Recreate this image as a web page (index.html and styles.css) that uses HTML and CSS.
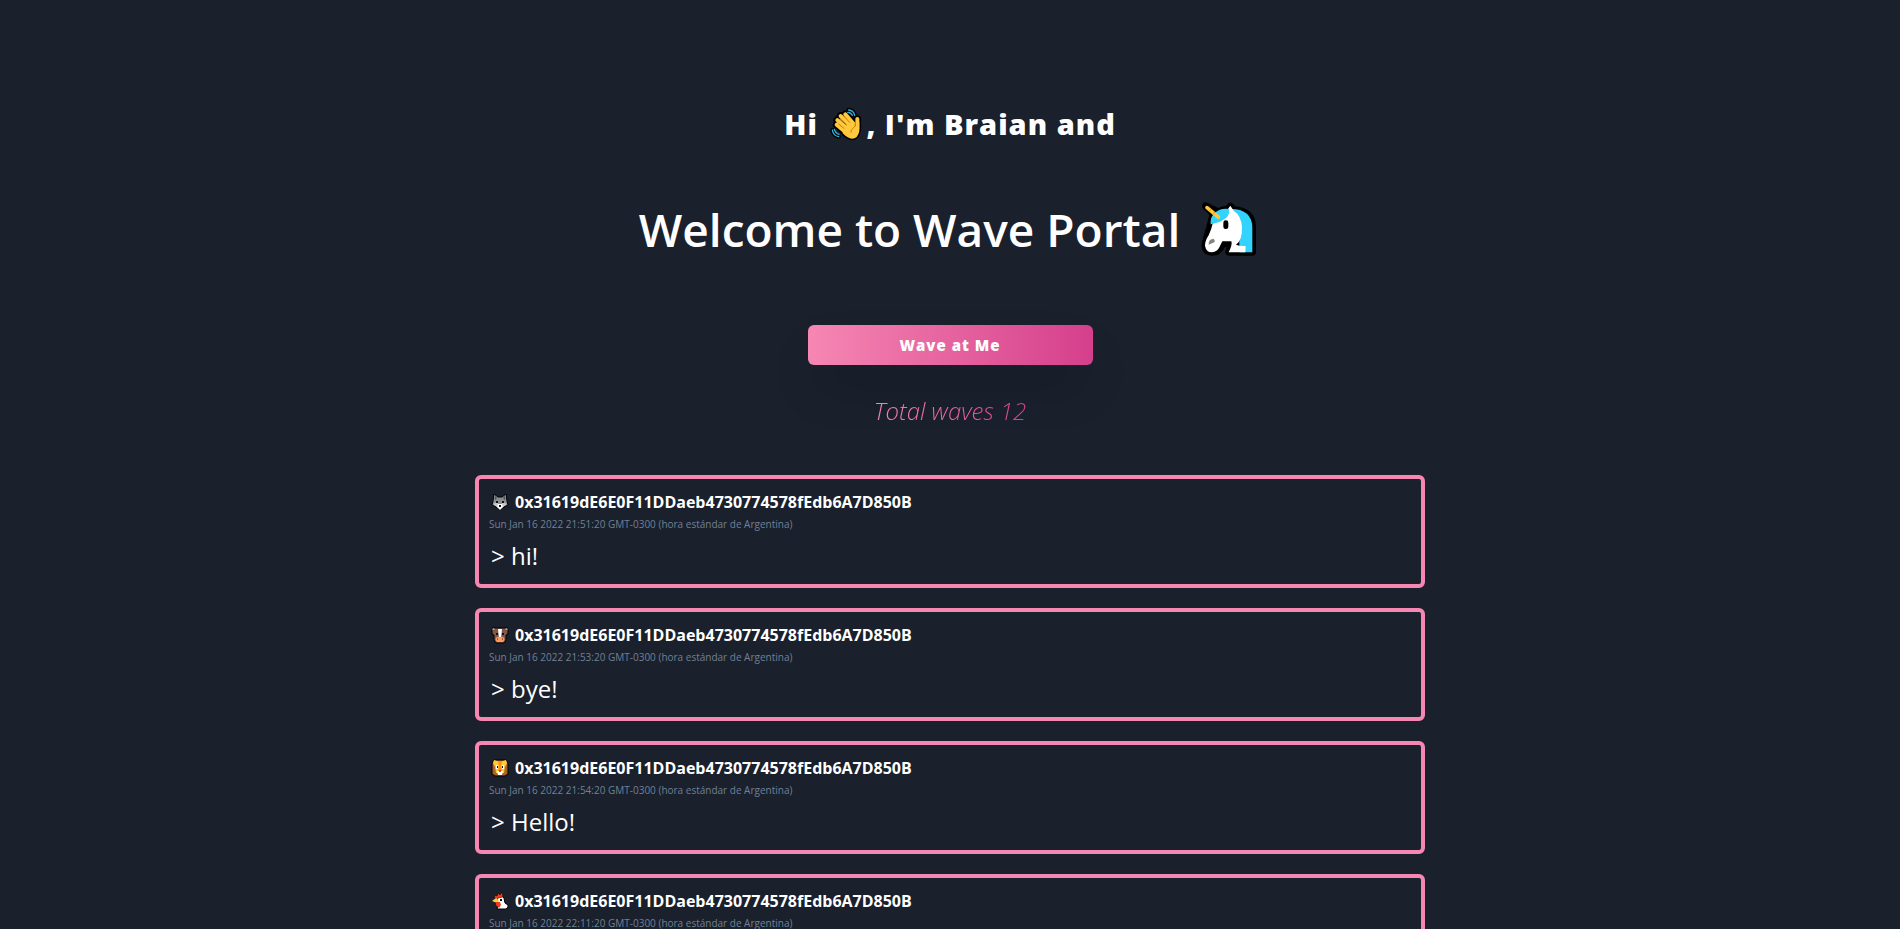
FILE: index.html
```html
<!DOCTYPE html>
<html lang="en">
<head>
<meta charset="utf-8">
<meta name="viewport" content="width=device-width, initial-scale=1">
<title>Wave Portal</title>
<link rel="stylesheet" href="styles.css">
</head>
<body>
<main class="portal">
  <h2 class="greeting">Hi
    <svg class="icon-wave" viewBox="20 18 96 102" role="img" aria-label="waving hand">
      <g fill="none" stroke="#000" stroke-linecap="round" stroke-linejoin="round">
        <path stroke-width="13" d="M76 27Q90 28 94 43M27 87Q31 104 46 107"/>
        <path stroke-width="23" d="M42 57L72 84M40 71L70 96M52 45L82 75M66 40L90 68M102 54V84"/>
        <path fill="#000" stroke-width="11" d="M60 75L88 65L96 80L106 62V92Q102 112 86 112Q72 112 56 94Z"/>
      </g>
      <path fill="none" stroke="#31b5de" stroke-width="4" stroke-linecap="round" d="M76 27Q91 28 94 43M73 34Q83 34 87 43M27 87Q30 104 46 107M33 85Q37 98 47 100"/>
      <g fill="none" stroke="#ffc83d" stroke-width="12" stroke-linecap="round"><path d="M42 57L72 84M40 71L70 96M52 45L82 75M66 40L90 68M102 54V84"/></g>
      <path fill="#ffc83d" d="M58 74L88 62L96 76L108 62V90Q104 113 86 113Q74 113 58 97Z"/>
      <path fill="none" stroke="#d67d00" stroke-width="3" stroke-linecap="round" d="M46 69L62 82M51 55L70 72M63 47L79 64M96 67Q98 77 88 82Q82 87 83 94"/>
    </svg>, I'm Braian and</h2>
  <h1 class="title">Welcome to Wave Portal
    <svg class="icon-unicorn" viewBox="36 34 171 168" role="img" aria-label="unicorn">
      <path fill="#000" stroke="#000" stroke-width="22" stroke-linejoin="round" d="M53 49L76 71L69 101L52 162Q49 182 66 186Q82 190 92 181L106 161H130L123 187H193V112Q193 64 135 60L127 50L119 60Q103 58 92 68Z"/>
      <path fill="#32d4ff" d="M127 57Q193 58 193 115V188H154V95Z"/>
      <path fill="#fff" d="M127 48L117 62L75 98Q71 118 62 137Q51 153 51 168Q54 187 72 188Q88 187 94 173L103 155H130Q134 164 122 188H172L173 169Q154 170 144 165Q163 153 162 112Q160 78 137 63Z"/>
      <path fill="#32d4ff" d="M68 104Q66 82 80 70Q97 54 123 58Q126 81 105 91Q91 100 68 104Z"/>
      <path stroke="#ffc83d" stroke-width="11" stroke-linecap="round" d="M57 54L91 82"/>
      <path stroke="#e19b16" stroke-width="3" d="M64 65L70 58M74 74L80 67"/>
      <rect fill="#000" x="106" y="92" width="15" height="26" rx="7"/>
      <path fill="#858585" d="M62 165Q61 149 75 147Q83 151 79 158Z"/>
    </svg>
  </h1>
  <button class="wave-button" type="button">Wave at Me</button>
  <p class="total">Total waves 12</p>
  <section class="waves" aria-label="Waves">
    <article class="card">
      <h3 class="address">
        <svg class="icon-animal" viewBox="0 0 18 18" role="img" aria-label="wolf">
          <path fill="#8a8d91" stroke="#000" stroke-linejoin="round" d="M3 1L7 4H11L15 1L16 8L17 12L13 14L9 17L5 14L1 12L2 8Z"/>
          <path fill="#4a4a4a" d="M4 3L6 5L4 7ZM14 3L12 5L14 7Z"/><path fill="#c8c8c8" d="M2 11L6 9L8 12L6 14ZM16 11L12 9L10 12L12 14Z"/><path fill="#fff" d="M7 11H11L12 14L9 17L6 14Z"/><path fill="#111" d="M5 8H7V10H5ZM11 8H13V10H11ZM8 12H10V14H8Z"/>
        </svg><span>0x31619dE6E0F11DDaeb4730774578fEdb6A7D850B</span>
      </h3>
      <time class="date">Sun Jan 16 2022 21:51:20 GMT-0300 (hora estándar de Argentina)</time>
      <p class="message">&gt; hi!</p>
    </article>
    <article class="card">
      <h3 class="address">
        <svg class="icon-animal" viewBox="0 0 18 18" role="img" aria-label="cow">
          <path fill="#80594a" stroke="#000" stroke-linejoin="round" d="M2 1L4 2H14L16 1L17 4L17 8L15 9L15 14L13 17H5L3 14L3 9L1 8L1 4Z"/>
          <path fill="#999" d="M2 2L4 3L3 4L1 4ZM16 2L14 3L15 4L17 4Z"/><path fill="#fff" d="M7 3H11L10 12H8Z"/><path fill="#ff9b62" d="M6 11H12Q15 13 12 16H6Q3 13 6 11Z"/><path fill="#111" d="M5 7H7V9H5ZM11 7H13V9H11Z"/><path fill="#b94d25" d="M6 12H7V14H6ZM11 12H12V14H11Z"/>
        </svg><span>0x31619dE6E0F11DDaeb4730774578fEdb6A7D850B</span>
      </h3>
      <time class="date">Sun Jan 16 2022 21:53:20 GMT-0300 (hora estándar de Argentina)</time>
      <p class="message">&gt; bye!</p>
    </article>
    <article class="card">
      <h3 class="address">
        <svg class="icon-animal" viewBox="0 0 18 18" role="img" aria-label="lion">
          <path fill="#a56527" stroke="#000" stroke-linejoin="round" d="M3 1H15L17 4V15L14 17H4L1 15V4Z"/>
          <path fill="#ffc83d" d="M3 1L6 2H12L15 1L16 4L14 8L13 14H5L4 8L2 4Z"/><path fill="#f7940b" d="M7 2H11L10 7L11 12H7L8 7Z"/><path fill="#fff" d="M5 6H7V10H5ZM11 6H13V10H11ZM6 12H12L11 16H7Z"/><path fill="#111" d="M6 7H7V9H6ZM11 7H12V9H11Z"/><path fill="#f03a17" d="M8 11H10V13H8Z"/>
        </svg><span>0x31619dE6E0F11DDaeb4730774578fEdb6A7D850B</span>
      </h3>
      <time class="date">Sun Jan 16 2022 21:54:20 GMT-0300 (hora estándar de Argentina)</time>
      <p class="message">&gt; Hello!</p>
    </article>
    <article class="card">
      <h3 class="address">
        <svg class="icon-animal" viewBox="0 0 18 18" role="img" aria-label="chicken">
          <path fill="#fff" stroke="#000" stroke-linejoin="round" d="M6 6Q10 2 13 6L14 11L17 13V15L15 17H6L7 13L5 10Z"/>
          <path fill="#f03a17" stroke="#000" stroke-width="0.5" d="M4 6L3 3L6 4L7 1L9 3L11 0L12 5L7 6L6 8Z"/><path fill="#ffc83d" d="M1 9L5 6L8 9L6 11Z"/><path fill="#f03a17" d="M5 10H9L10 13L8 16L5 13Z"/><path fill="#111" d="M9 7H11V9H9Z"/>
        </svg><span>0x31619dE6E0F11DDaeb4730774578fEdb6A7D850B</span>
      </h3>
      <time class="date">Sun Jan 16 2022 22:11:20 GMT-0300 (hora estándar de Argentina)</time>
      <p class="message">&gt; Hello!</p>
    </article>
  </section>
</main>
</body>
</html>
```

FILE: styles.css
```css
* { box-sizing: border-box; }

body {
  margin: 0;
  background: #1a202c;
  color: #fff;
  font-family: "Segoe UI", "Open Sans", "Noto Sans", sans-serif;
  font-size: 16px;
  line-height: 24px;
}

h1, h2, h3, p { margin: 0; }

.portal {
  display: flex;
  flex-direction: column;
  align-items: center;
  padding: 104px 0 40px;
}

.greeting {
  font-size: 29px;
  font-weight: 800;
  letter-spacing: 1px;
  line-height: 40px;
}

.title {
  margin-top: 55px;
  font-size: 46px;
  font-weight: 600;
  line-height: 60px;
}

.icon-wave { width: 32px; height: 34px; margin: 0 4px; vertical-align: -6px; }
.icon-unicorn { width: 57px; height: 56px; margin: 0 4px 0 8px; vertical-align: -10px; }

.wave-button {
  width: 15%;
  height: 40px;
  margin-top: 66px;
  border: 0;
  border-radius: 6px;
  background: linear-gradient(to right, #f687b3, #d53f8c);
  box-shadow: 0 25px 50px -12px rgba(0, 0, 0, 0.25);
  color: #fff;
  font: inherit;
  font-size: 15px;
  font-weight: 800;
  letter-spacing: 1px;
  cursor: pointer;
}

.total {
  margin-top: 28px;
  padding: 0 2px;
  background: linear-gradient(to right, #f687b3, #d53f8c);
  background-clip: text;
  color: transparent;
  font-size: 24px;
  font-style: italic;
  font-weight: 300;
  line-height: 36px;
}

.waves {
  display: flex;
  flex-direction: column;
  gap: 20px;
  width: 50%;
  margin-top: 46px;
}

.card {
  padding: 11px 10px 8px;
  border: 4px solid #f687b3;
  border-radius: 6px;
}

.address {
  display: flex;
  align-items: center;
  gap: 6px;
  padding-left: 2px;
  font-size: 16px;
  font-weight: 700;
  line-height: 24px;
}

.icon-animal { width: 18px; height: 18px; }

.date {
  display: block;
  color: #718096;
  font-size: 10px;
  line-height: 20px;
}

.message {
  padding: 2px 0 0 2px;
  font-size: 24px;
  line-height: 40px;
}
```
